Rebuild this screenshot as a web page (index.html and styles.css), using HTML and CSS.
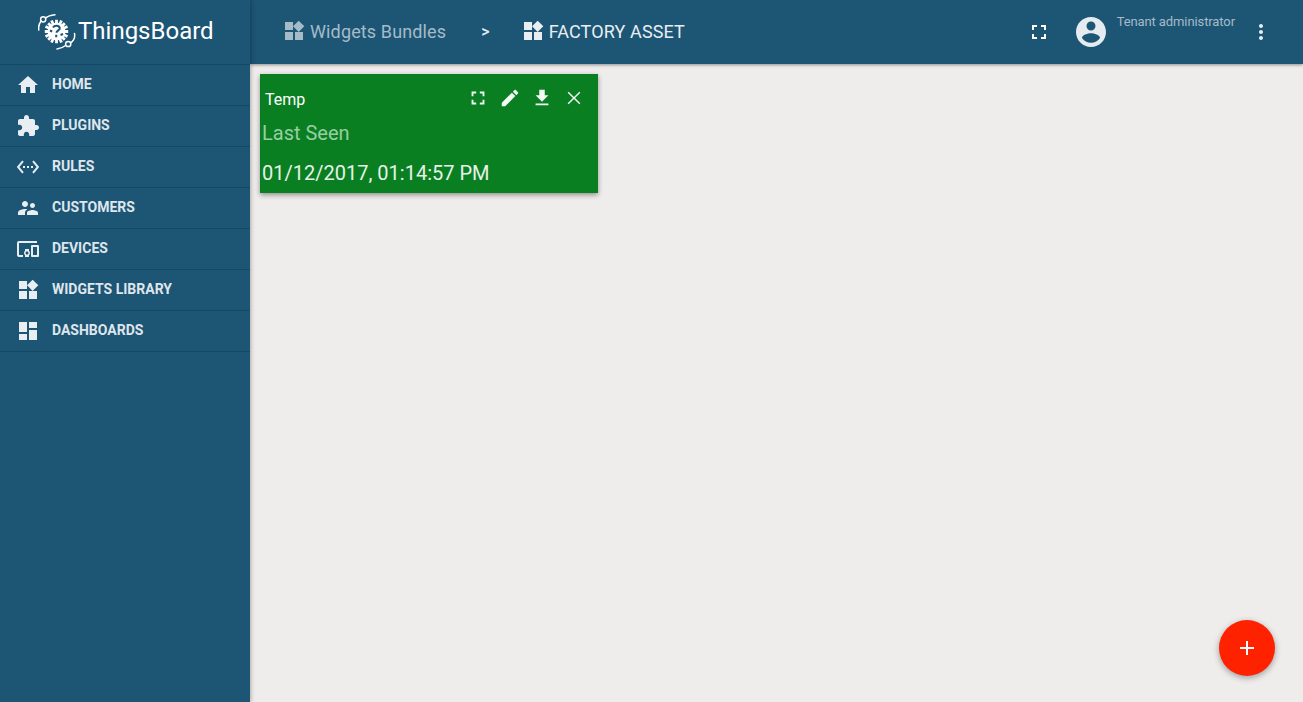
FILE: index.html
```html
<!DOCTYPE html>
<html lang="en">
<head>
<meta charset="utf-8">
<title>ThingsBoard</title>
<link rel="stylesheet" href="styles.css">
</head>
<body>
<svg class="defs" width="0" height="0" aria-hidden="true">
  <symbol id="i-widgets" viewBox="0 0 24 24"><path d="M13 13v8h8v-8h-8zM3 21h8v-8H3v8zM3 3v8h8V3H3zm13.66-1.31L11 7.34 16.66 13l5.66-5.66-5.66-5.65z"/></symbol>
  <symbol id="i-full" viewBox="0 0 24 24"><path d="M7 14H5v5h5v-2H7v-3zm-2-4h2V7h3V5H5v5zm12 7h-3v2h5v-5h-2v3zM14 5v2h3v3h2V5h-5z"/></symbol>
</svg>
<div class="app">
  <aside class="sidebar">
    <div class="brand">
      <svg class="logo" viewBox="0 0 38 38">
        <circle cx="18.500" cy="18.500" r="9" fill="#fff"/>
        <path d="M18.500 6.800v23.400M6.800 18.500h23.400M10.200 10.200l16.600 16.600M26.800 10.200L10.200 26.800M13.500 7.500l10 22M23.500 7.500l-10 22M7.500 13.500l22 10M7.500 23.500l22-10" fill="none" stroke="#fff" stroke-width="2.800"/>
        <path d="M15 14.500c1.500-2.500 6-2.500 6.800.5.500 2.200-3.300 2.500-3.300 4.800m-.3 2v2.500M12 17.500l2.200 1M25 21l-2.500 1" fill="none" stroke="#1d5575" stroke-width="2"/>
        <g fill="none" stroke="#fff" stroke-width="1.500" stroke-linecap="round">
          <path d="M.8 17C.2 13.500 1 10.500 3.200 8M7.600 5C10 3 13 2.200 17 1.800"/>
          <circle cx="5.200" cy="6.300" r="2.600"/>
          <path d="M36.500 20.500c.7 3.500 0 6.500-3.800 9.300M27.500 32.500c-2.500 2-5 3-8.500 3.500"/>
          <circle cx="30.200" cy="31" r="2.600"/>
        </g>
      </svg>
      <span class="brand-name">ThingsBoard</span>
    </div>
    <nav class="menu">
      <a class="menu-item"><svg class="menu-icon" viewBox="0 0 24 24"><path d="M10 20v-6h4v6h5v-8h3L12 3 2 12h3v8z"/></svg>HOME</a>
      <a class="menu-item"><svg class="menu-icon" viewBox="0 0 24 24"><path d="M20.5 11H19V7c0-1.100-.9-2-2-2h-4V3.500C13 2.120 11.880 1 10.500 1S8 2.120 8 3.500V5H4c-1.100 0-1.990.9-1.990 2v3.800H3.500c1.490 0 2.700 1.210 2.700 2.700s-1.210 2.700-2.700 2.700H2V20c0 1.100.9 2 2 2h3.800v-1.500c0-1.490 1.210-2.700 2.700-2.700 1.490 0 2.700 1.210 2.700 2.700V22H17c1.100 0 2-.9 2-2v-4h1.500c1.380 0 2.500-1.120 2.500-2.500S21.880 11 20.500 11z"/></svg>PLUGINS</a>
      <a class="menu-item"><svg class="menu-icon" viewBox="0 0 24 24"><path d="M7.770 6.760L6.230 5.480.82 12l5.410 6.520 1.540-1.280L3.420 12l4.350-5.240zM7 13h2v-2H7v2zm10-2h-2v2h2v-2zm-6 2h2v-2h-2v2zm6.770-7.520l-1.540 1.280L20.580 12l-4.350 5.240 1.540 1.280L23.180 12l-5.410-6.520z"/></svg>RULES</a>
      <a class="menu-item"><svg class="menu-icon" viewBox="0 0 24 24"><path d="M16.500 12c1.380 0 2.490-1.120 2.490-2.500S17.880 7 16.500 7C15.120 7 14 8.120 14 9.500s1.120 2.500 2.500 2.500zM9 11c1.660 0 2.990-1.340 2.990-3S10.660 5 9 5C7.340 5 6 6.340 6 8s1.340 3 3 3zm7.500 3c-1.830 0-5.500.92-5.500 2.750V19h11v-2.250c0-1.830-3.670-2.750-5.500-2.750zM9 13c-2.330 0-7 1.170-7 3.500V19h7v-2.250c0-.85.33-2.340 2.370-3.470C10.500 13.100 9.660 13 9 13z"/></svg>CUSTOMERS</a>
      <a class="menu-item"><svg class="menu-icon" viewBox="0 0 24 24"><path d="M3 6h18V4H3c-1.100 0-2 .9-2 2v12c0 1.100.9 2 2 2h4v-2H3V6zm10 6H9v1.780c-.61.55-1 1.330-1 2.220s.39 1.670 1 2.220V20h4v-1.780c.61-.55 1-1.340 1-2.220s-.39-1.670-1-2.220V12zm-2 5.500c-.83 0-1.500-.67-1.500-1.500s.67-1.500 1.500-1.500 1.500.67 1.500 1.500-.67 1.500-1.500 1.500zM22 8h-6c-.5 0-1 .5-1 1v10c0 .5.5 1 1 1h6c.5 0 1-.5 1-1V9c0-.5-.5-1-1-1zm-1 10h-4v-8h4v8z"/></svg>DEVICES</a>
      <a class="menu-item"><svg class="menu-icon"><use href="#i-widgets"/></svg>WIDGETS LIBRARY</a>
      <a class="menu-item"><svg class="menu-icon" viewBox="0 0 24 24"><path d="M3 13h8V3H3v10zm0 8h8v-6H3v6zm10 0h8V11h-8v10zm0-18v6h8V3h-8z"/></svg>DASHBOARDS</a>
    </nav>
  </aside>
  <div class="main">
    <header class="topbar">
      <div class="crumbs">
        <span class="crumb crumb-muted"><svg class="crumb-icon"><use href="#i-widgets"/></svg>Widgets Bundles</span>
        <span class="crumb-sep">&gt;</span>
        <span class="crumb"><svg class="crumb-icon"><use href="#i-widgets"/></svg>FACTORY ASSET</span>
      </div>
      <svg class="top-full"><use href="#i-full"/></svg>
      <svg class="avatar" viewBox="0 0 24 24"><path d="M12 2C6.480 2 2 6.480 2 12s4.480 10 10 10 10-4.480 10-10S17.520 2 12 2zm0 3c1.660 0 3 1.340 3 3s-1.340 3-3 3-3-1.340-3-3 1.340-3 3-3zm0 14.200c-2.500 0-4.710-1.280-6-3.220.03-1.990 4-3.080 6-3.080 1.990 0 5.970 1.090 6 3.080-1.290 1.940-3.500 3.220-6 3.220z"/></svg>
      <span class="user-role">Tenant administrator</span>
      <svg class="more" viewBox="0 0 24 24"><path d="M12 8c1.100 0 2-.9 2-2s-.9-2-2-2-2 .9-2 2 .9 2 2 2zm0 2c-1.100 0-2 .9-2 2s.9 2 2 2 2-.9 2-2-.9-2-2-2zm0 6c-1.100 0-2 .9-2 2s.9 2 2 2 2-.9 2-2-.9-2-2-2z"/></svg>
    </header>
    <main class="canvas">
      <section class="widget">
        <div class="widget-head">
          <span class="widget-title">Temp</span>
          <div class="widget-actions">
            <svg class="w-icon"><use href="#i-full"/></svg>
            <svg class="w-icon" viewBox="0 0 24 24"><path d="M3 17.250V21h3.750L17.810 9.940l-3.750-3.750L3 17.250zM20.710 7.040c.39-.39.39-1.020 0-1.410l-2.340-2.340c-.39-.39-1.020-.39-1.410 0l-1.830 1.830 3.750 3.750 1.830-1.830z"/></svg>
            <svg class="w-icon" viewBox="0 0 24 24"><path d="M19 9h-4V3H9v6H5l7 7 7-7zM5 18v2h14v-2H5z"/></svg>
            <svg class="w-icon" viewBox="0 0 24 24"><path d="M18.900 6.200L17.800 5.100 12 10.900 6.200 5.100 5.100 6.200 10.900 12 5.100 17.800 6.200 18.900 12 13.100 17.800 18.900 18.900 17.800 13.100 12z"/></svg>
          </div>
        </div>
        <div class="widget-label">Last Seen</div>
        <div class="widget-value">01/12/2017, 01:14:57 PM</div>
      </section>
      <button class="fab" type="button" aria-label="Add"><svg class="fab-icon" viewBox="0 0 24 24"><path d="M19 13h-6v6h-2v-6H5v-2h6V5h2v6h6v2z"/></svg></button>
    </main>
  </div>
</div>
</body>
</html>
```
FILE: styles.css
```css
* { box-sizing: border-box; }
html, body { margin: 0; height: 100%; }
body { font-family: Roboto, "Liberation Sans", sans-serif; background: #eeedec; overflow: hidden; }
.defs { position: absolute; }
.app { display: flex; height: 702px; }

.sidebar { width: 250px; flex: none; background: #1d5575; position: relative; z-index: 2; box-shadow: 1px 0 4px rgba(0,0,0,.28); }
.brand { height: 65px; display: flex; align-items: center; padding-left: 38px; gap: 2px; border-bottom: 1px solid #174862; }
.logo { width: 38px; height: 38px; flex: none; }
.brand-name { color: #fff; font-size: 24px; line-height: 28px; font-weight: 400; margin-top: -2px; }
.menu { display: flex; flex-direction: column; }
.menu-item { height: 41px; display: flex; align-items: center; padding: 0 0 2px 16px; gap: 12px; color: #dfe6ec; font-size: 14px; font-weight: 700; border-bottom: 1px solid #174862; }
.menu-icon { width: 24px; height: 24px; fill: #e9eef2; flex: none; margin-top: 2px; }

.main { flex: 1; display: flex; flex-direction: column; min-width: 0; }
.topbar { height: 64px; flex: none; background: #1d5575; display: flex; align-items: center; padding-left: 32px; box-shadow: 0 1px 3px rgba(0,0,0,.4); position: relative; z-index: 1; }
.crumbs { display: flex; align-items: center; font-size: 18px; font-weight: 400; letter-spacing: .13px; color: #e9eef2; flex: 1; margin-top: -2px; }
.crumb { display: flex; align-items: center; gap: 4px; }
.crumb-muted { color: #a5bbc8; }
.crumb-muted .crumb-icon { fill: #a5bbc8; }
.crumb-icon { width: 24px; height: 24px; fill: #e9eef2; flex: none; }
.crumb-sep { font-size: 16px; font-weight: 500; margin: 0 31px 0 35px; }
.top-full { width: 24px; height: 24px; fill: #fff; flex: none; }
.avatar { width: 36px; height: 36px; fill: #e6ebef; flex: none; margin-left: 22px; }
.user-role { align-self: flex-start; margin: 14px 0 0 8px; font-size: 13px; line-height: 15px; letter-spacing: -.1px; color: #a5bbc8; }
.more { width: 24px; height: 24px; fill: #e9eef2; flex: none; margin: 0 30px 0 14px; }

.canvas { flex: 1; position: relative; padding: 10px; }
.widget { width: 338px; height: 119px; background: #0a7f22; box-shadow: 0 2px 5px rgba(0,0,0,.4); padding: 0 2px; }
.widget-head { display: flex; align-items: center; height: 46px; padding: 0 11px 0 3px; }
.widget-title { color: #fff; font-size: 16px; flex: 1; margin-top: 5px; }
.widget-actions { display: flex; gap: 10px; margin-top: 1px; }
.w-icon { width: 22px; height: 22px; fill: #f4faf5; flex: none; }
.widget-label { font-size: 20px; line-height: 26px; color: #97cfa3; }
.widget-value { font-size: 20px; line-height: 26px; color: #e6f3e8; margin-top: 14px; }

.fab { position: absolute; right: 28px; bottom: 26px; width: 56px; height: 56px; border: 0; border-radius: 50%; background: #ff2200; box-shadow: 0 2px 6px rgba(0,0,0,.35); display: flex; align-items: center; justify-content: center; padding: 0; }
.fab-icon { width: 24px; height: 24px; fill: #fff; }
```
